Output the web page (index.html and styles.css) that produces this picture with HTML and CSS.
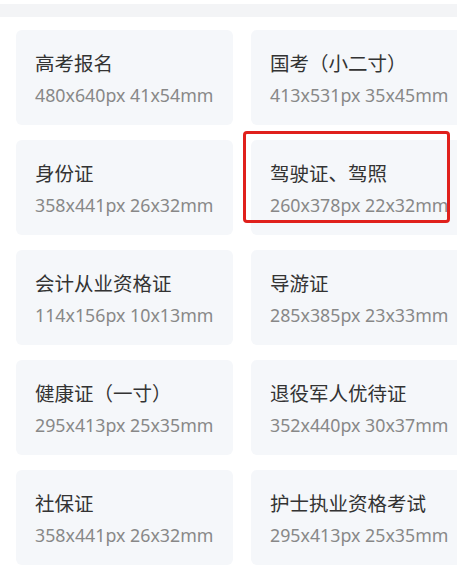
FILE: index.html
```html
<!DOCTYPE html>
<html lang="zh-CN">
<head>
  <meta charset="UTF-8" />
  <title>证件照规格</title>
  <link rel="stylesheet" href="styles.css">
</head>
<body>
  <div class="topbar"></div>
  <div class="grid">
    <div class="card"><div class="name">高考报名</div><div class="size">480x640px 41x54mm</div></div>
    <div class="card"><div class="name">国考（小二寸）</div><div class="size">413x531px 35x45mm</div></div>
    <div class="card"><div class="name">身份证</div><div class="size">358x441px 26x32mm</div></div>
    <div class="card"><div class="name">驾驶证、驾照</div><div class="size">260x378px 22x32mm</div></div>
    <div class="card"><div class="name">会计从业资格证</div><div class="size">114x156px 10x13mm</div></div>
    <div class="card"><div class="name">导游证</div><div class="size">285x385px 23x33mm</div></div>
    <div class="card"><div class="name">健康证（一寸）</div><div class="size">295x413px 25x35mm</div></div>
    <div class="card"><div class="name">退役军人优待证</div><div class="size">352x440px 30x37mm</div></div>
    <div class="card"><div class="name">社保证</div><div class="size">358x441px 26x32mm</div></div>
    <div class="card"><div class="name">护士执业资格考试</div><div class="size">295x413px 25x35mm</div></div>
  </div>
  <div class="mark"></div>
</body>
</html>
```
FILE: styles.css
```css
* { margin: 0; padding: 0; box-sizing: border-box; }
body {
  font-family: "Noto Sans", "Noto Sans CJK SC", sans-serif;
  background: #fff;
  width: 457px;
  height: 571px;
  overflow: hidden;
  position: relative;
}
.topbar {
  height: 13px;
  margin-top: 4px;
  background: #f3f4f6;
}
.grid {
  display: grid;
  grid-template-columns: 217px 217px;
  column-gap: 18px;
  row-gap: 15px;
  padding: 13px 0 0 16px;
}
.card {
  background: #f5f7fa;
  border-radius: 6px;
  height: 95px;
  padding: 21px 19px 0;
}
.name {
  font-size: 19.5px;
  line-height: 26px;
  color: #333;
  white-space: nowrap;
}
.size {
  font-size: 17.8px;
  line-height: 24px;
  margin-top: 6px;
  color: #888;
  white-space: nowrap;
}
.mark {
  position: absolute;
  left: 243px;
  top: 131px;
  width: 207px;
  height: 92px;
  border: 3px solid #e0201c;
  border-radius: 4px;
}
```
